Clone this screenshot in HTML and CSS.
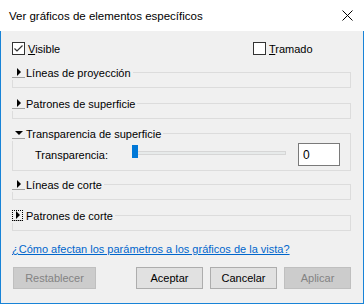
FILE: index.html
```html
<!DOCTYPE html>
<html lang="es">
<head>
    <meta charset="UTF-8">
    <title>Ver gráficos de elementos específicos</title>
    <link rel="stylesheet" href="styles.css">
</head>
<body>
    <div class="titlebar">
        <span class="title">Ver gráficos de elementos específicos</span>
        <svg class="close" viewBox="0 0 11 11" xmlns="http://www.w3.org/2000/svg">
            <path d="M0.5 0.5L10.5 10.5M10.5 0.5L0.5 10.5"></path>
        </svg>
    </div>
    <div class="dialog">
        <div class="checks">
            <label class="check">
                <span class="box">
                    <svg viewBox="0 0 11 11" xmlns="http://www.w3.org/2000/svg"><path d="M1.5 5.5L4 8L9.5 2.5"></path></svg>
                </span>
                <span><u>V</u>isible</span>
            </label>
            <label class="check">
                <span class="box"></span>
                <span><u>T</u>ramado</span>
            </label>
        </div>

        <fieldset class="group">
            <legend><span class="expander"><span class="arrow-right"></span></span>Líneas de proyección</legend>
        </fieldset>

        <fieldset class="group">
            <legend><span class="expander"><span class="arrow-right"></span></span>Patrones de superficie</legend>
        </fieldset>

        <fieldset class="group open">
            <legend><span class="expander"><span class="arrow-down"></span></span>Transparencia de superficie</legend>
            <div class="slider-row">
                <span class="slider-label">Transparencia:</span>
                <div class="slider">
                    <span class="track"></span>
                    <span class="thumb"></span>
                </div>
                <input class="numbox" type="text" value="0">
            </div>
        </fieldset>

        <fieldset class="group">
            <legend><span class="expander"><span class="arrow-right"></span></span>Líneas de corte</legend>
        </fieldset>

        <fieldset class="group">
            <legend><span class="expander focused"><span class="arrow-right"></span></span>Patrones de corte</legend>
        </fieldset>

        <a class="help" href="#">¿Cómo afectan los parámetros a los gráficos de la vista?</a>

        <div class="buttons">
            <button class="btn wide" disabled>Restablecer</button>
            <span class="spacer"></span>
            <button class="btn">Aceptar</button>
            <button class="btn">Cancelar</button>
            <button class="btn" disabled>Aplicar</button>
        </div>
    </div>
</body>
</html>
```

FILE: styles.css
```css
* {
    margin: 0;
    padding: 0;
    box-sizing: border-box;
}

body {
    width: 364px;
    height: 304px;
    font-family: "Liberation Sans", Arial, sans-serif;
    font-size: 11px;
    color: #000;
    background: #fff;
}

.titlebar {
    height: 31px;
    display: flex;
    align-items: center;
    justify-content: space-between;
    padding: 0 11px 0 9px;
    background: #fff;
}

.title {
    font-size: 11.5px;
}

.close {
    width: 11px;
    height: 11px;
    stroke: #000;
    stroke-width: 1;
    fill: none;
}

.dialog {
    height: 273px;
    background: #f0f0f0;
    border: 1px solid #1883d7;
    border-top: none;
    padding: 0 12px 0 11px;
    display: flex;
    flex-direction: column;
}

.checks {
    display: grid;
    grid-template-columns: 241px auto;
    height: 13px;
    margin-top: 11px;
}

.check {
    display: flex;
    align-items: center;
    gap: 3px;
}

.box {
    width: 13px;
    height: 13px;
    border: 1px solid #333;
    background: #fff;
    display: flex;
}

.box svg {
    width: 11px;
    height: 11px;
    stroke: #333;
    stroke-width: 1.2;
    fill: none;
}

.group {
    border: 1px solid #dcdcdc;
    margin-top: 10px;
    padding: 0 0 7px;
    min-width: 0;
}

.group + .group {
    margin-top: 8px;
}

.group.open {
    margin-top: 7px;
    padding-bottom: 4px;
}

.group.open + .group {
    margin-top: 6px;
}

.group legend {
    display: flex;
    align-items: center;
    height: 15px;
    margin-left: -1px;
    padding-right: 2px;
}

.expander {
    width: 13px;
    height: 11px;
    margin-right: 1px;
    background: #f0f0f0;
    border-bottom: 1px solid #a0a0a0;
    display: flex;
    align-items: center;
    justify-content: center;
}

.expander.focused {
    outline: 1px dotted #000;
    outline-offset: -1px;
    width: 11px;
    margin-right: 3px;
}

.arrow-right {
    width: 0;
    height: 0;
    border-top: 4px solid transparent;
    border-bottom: 4px solid transparent;
    border-left: 4px solid #000;
    margin-left: 1px;
}

.arrow-down {
    width: 0;
    height: 0;
    border-left: 4px solid transparent;
    border-right: 4px solid transparent;
    border-top: 4px solid #000;
}

.slider-row {
    display: flex;
    align-items: center;
    height: 23px;
    margin: 2px 10px 0 22px;
}

.slider-label {
    width: 97px;
}

.slider {
    width: 154px;
    height: 23px;
    position: relative;
}

.track {
    position: absolute;
    left: 2px;
    right: 0;
    top: 8px;
    height: 4px;
    background: #e7eaea;
    border: 1px solid #d6d6d6;
}

.thumb {
    position: absolute;
    left: 0;
    top: 2px;
    width: 6px;
    height: 13px;
    background: #0078d7;
}

.numbox {
    width: 42px;
    height: 23px;
    margin-left: 12px;
    border: 1px solid #7a7a7a;
    background: #fff;
    font: inherit;
    font-size: 12px;
    padding-left: 4px;
    outline: none;
}

.help {
    margin-top: 10px;
    height: 16px;
    line-height: 16px;
    color: #0066cc;
    font-size: 11px;
}

.buttons {
    display: flex;
    gap: 7px;
    margin-top: 10px;
    padding-left: 1px;
}

.spacer {
    flex: 1;
}

.btn {
    width: 67px;
    height: 22px;
    font: inherit;
    font-size: 11px;
    background: #e1e1e1;
    border: 1px solid #adadad;
    color: #000;
}

.btn.wide {
    width: 83px;
}

.btn:disabled {
    background: #cccccc;
    border-color: #bfbfbf;
    color: #838383;
}
```
